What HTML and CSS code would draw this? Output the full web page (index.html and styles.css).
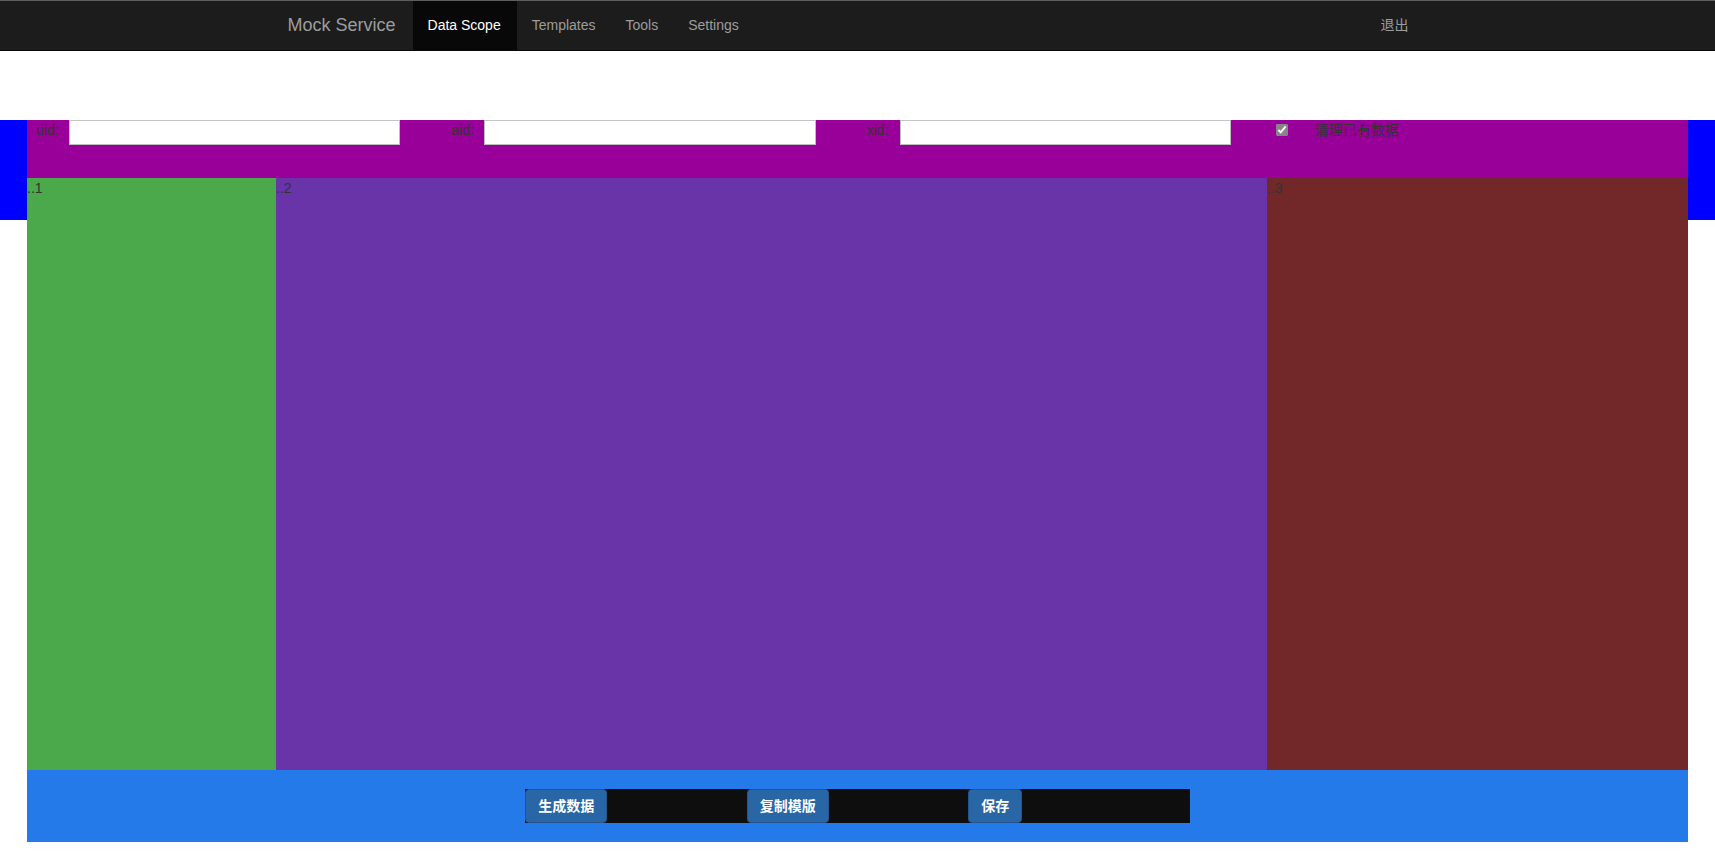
FILE: index.html
```html
<!DOCTYPE html>
<html lang="zh">
<head>
<meta charset="utf-8">
<title>Mock Service</title>
<link rel="stylesheet" href="styles.css">
</head>
<body>
<nav class="navbar">
  <div class="nav-container">
    <a class="brand" href="#">Mock Service</a>
    <ul class="nav">
      <li class="active"><a href="#">Data Scope</a></li>
      <li><a href="#">Templates</a></li>
      <li><a href="#">Tools</a></li>
      <li><a href="#">Settings</a></li>
    </ul>
    <ul class="nav nav-right">
      <li><a href="#" class="cjk">退出</a></li>
    </ul>
  </div>
</nav>
<main class="page">
  <div class="panel">
    <form class="filters">
      <div class="field"><label>uid:</label><input type="text"></div>
      <div class="field"><label>aid:</label><input type="text"></div>
      <div class="field"><label>xid:</label><input type="text"></div>
      <div class="field field-check"><span class="check-slot"><input type="checkbox" checked></span><label class="cjk">清理已有数据</label></div>
    </form>
    <div class="columns">
      <div class="col col-a">..1</div>
      <div class="col col-b">..2</div>
      <div class="col col-c">..3</div>
    </div>
    <div class="actions">
      <div class="action-bar">
        <div class="action-cell"><button type="button" class="btn">生成数据</button></div>
        <div class="action-cell"><button type="button" class="btn">复制模版</button></div>
        <div class="action-cell"><button type="button" class="btn">保存</button></div>
      </div>
    </div>
  </div>
</main>
</body>
</html>
```
FILE: styles.css
```css
* { box-sizing: border-box; }
html, body { margin: 0; padding: 0; }
body {
  font-family: "Liberation Sans", "Noto Sans CJK SC", sans-serif;
  font-size: 14px;
  line-height: 20px;
  color: #333;
  background: #fff;
}
.cjk { font-family: "Liberation Sans", "Noto Sans CJK SC", sans-serif; }

/* navbar */
.navbar {
  background: #1c1c1c;
  border-top: 1px solid #5e5e5e;
  border-bottom: 1px solid #080808;
  height: 51px;
}
.nav-container {
  width: 1170px;
  margin: 0 auto;
  padding: 0 15px;
  display: flex;
  height: 49px;
}
.brand {
  margin-left: -15px;
  padding: 14px 17px 15px 15px;
  font-size: 18px;
  line-height: 20px;
  color: #9d9d9d;
  text-decoration: none;
}
.nav {
  list-style: none;
  margin: 0;
  padding: 0;
  display: flex;
}
.nav a {
  display: block;
  padding: 14px 15px 15px;
  color: #9d9d9d;
  text-decoration: none;
  line-height: 20px;
}
.nav .active a {
  background: #080808;
  color: #fff;
  padding-right: 16px;
}
.nav-right { margin-left: auto; margin-right: 4px; }

/* page */
.page {
  margin-top: 69px;
  padding: 0 27px;
  background: linear-gradient(#0000ff, #0000ff) top left / 100% 100px no-repeat;
}
.panel { display: flex; flex-direction: column; }

.filters {
  margin: 0;
  height: 58px;
  background: #990099;
  display: grid;
  grid-template-columns: repeat(4, 1fr);
}
.field {
  display: grid;
  grid-template-columns: 33px 1fr;
  padding: 0 42px 0 9px;
  align-items: start;
}
.field label { line-height: 20px; padding-top: 0; }
.field input[type="text"] {
  height: 25px;
  width: 100%;
  margin: 0;
  border: 1px solid #bdbdbd;
  border-top-color: #c4c4c4;
  background: #fff;
  padding: 2px 4px;
  font: inherit;
}
.field-check { padding-left: 0; grid-template-columns: 42px 1fr; }
.check-slot { padding: 1px 0 0 3px; line-height: 20px; }
.check-slot input {
  margin: 0;
  width: 12px;
  height: 12px;
  accent-color: #868686;
}
.field-check label { font-size: 14px; line-height: 20px; padding-top: 0; }

.columns {
  height: 592px;
  display: grid;
  grid-template-columns: 249px 1fr 421px;
}
.col { line-height: 20px; }
.col-a { background: #4ba94b; }
.col-b { background: #6834a8; }
.col-c { background: #722828; }

.actions {
  background: #237ae8;
  padding: 19px 0;
}
.action-bar {
  width: 40%;
  margin: 0 auto;
  background: #0e0e0e;
  display: grid;
  grid-template-columns: repeat(3, 1fr);
}
.btn {
  height: 34px;
  padding: 6px 12px;
  font-family: "Liberation Sans", "Noto Sans CJK SC", sans-serif;
  font-size: 14px;
  font-weight: 700;
  line-height: 20px;
  color: #fff;
  background: #2866a6;
  border: 1px solid #24558c;
  border-radius: 4px;
  cursor: pointer;
}
```
